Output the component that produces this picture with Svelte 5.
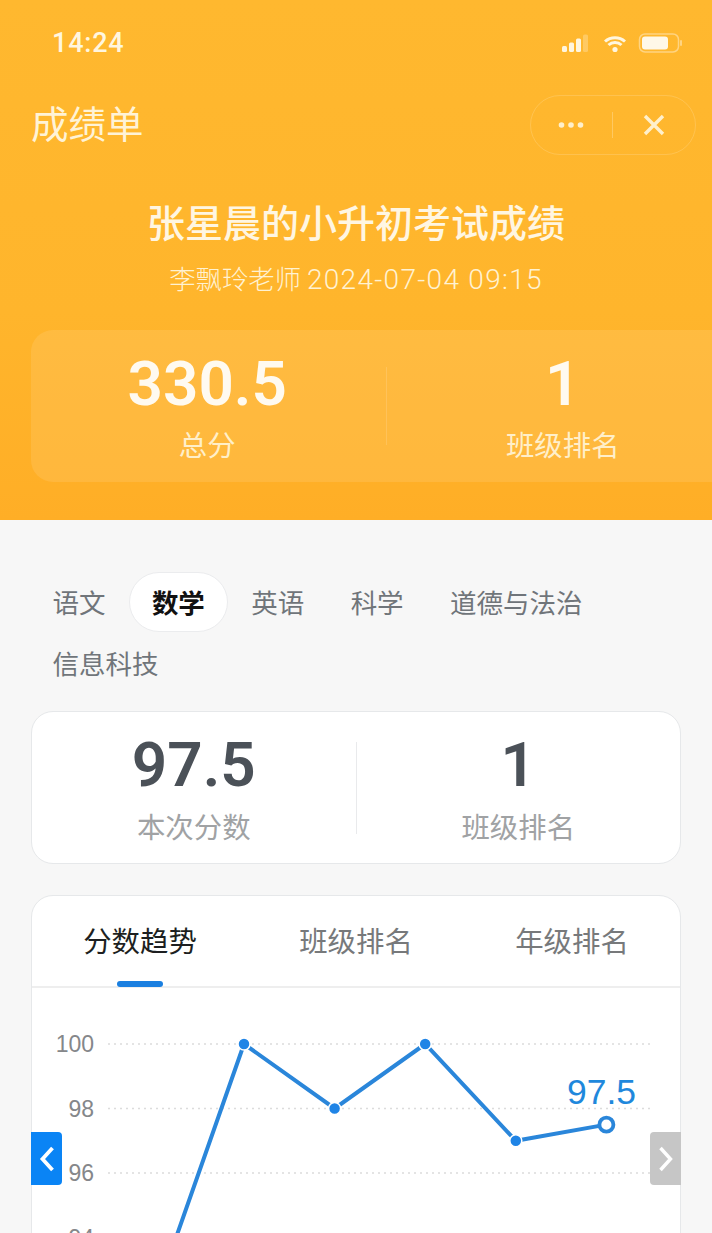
<script>
const subjects = ['语文', '数学', '英语', '科学', '道德与法治', '信息科技'];
const chartTabs = ['分数趋势', '班级排名', '年级排名'];

// y axis: 100 is at y=56, every 2 points is 64.5px
const yTicks = [100, 98, 96, 94];
const toY = v => 56 + (100 - v) * 32.25;
const scores = [92, 100, 98, 100, 97, 97.5];
const points = scores.map((v, i) => ({ x: 153.4 + i * 90.6, y: toY(v) }));
const linePath = points.map(p => `${p.x},${p.y}`).join(' ');
const last = points[points.length - 1];
</script>

<div class="page">
  <header class="hero">
    <div class="status">
      <span class="time">14:24</span>
      <svg class="status-icons" width="122" height="24" viewBox="0 0 122 24">
        <g fill="#fff6df">
          <rect x="2" y="15" width="5" height="6" rx="1.5" />
          <rect x="9" y="11.5" width="5" height="9.5" rx="1.5" />
          <rect x="16" y="7.5" width="5" height="13.5" rx="1.5" />
        </g>
        <rect x="23" y="3.5" width="5" height="17.5" rx="1.5" fill="#fff" opacity="0.25" />
        <path d="M45 10.5a15 15 0 0 1 20 0M48.5 14a9.5 9.5 0 0 1 13 0" fill="none" stroke="#fff6df" stroke-width="3" />
        <circle cx="55" cy="18.5" r="2.6" fill="#fff6df" />
        <rect x="79.5" y="3" width="39" height="18" rx="5.5" fill="none" stroke="#fff" stroke-opacity="0.4" stroke-width="1.5" />
        <rect x="82" y="5.5" width="26" height="13" rx="3" fill="#fff8e8" />
        <rect x="120" y="9" width="2" height="6" rx="1" fill="#fff" opacity="0.4" />
      </svg>
    </div>

    <div class="nav">
      <span class="nav-title">成绩单</span>
      <div class="capsule">
        <svg class="dots" width="26" height="8" viewBox="0 0 26 8">
          <circle cx="3.5" cy="4" r="2.8" fill="#fff0cc" />
          <circle cx="13" cy="4" r="2.8" fill="#fff0cc" />
          <circle cx="22.5" cy="4" r="2.8" fill="#fff0cc" />
        </svg>
        <span class="capsule-line"></span>
        <svg class="close" width="24" height="24" viewBox="0 0 24 24">
          <path d="M3 3l18 18M21 3L3 21" stroke="#fff0cc" stroke-width="3.4" fill="none" />
        </svg>
      </div>
    </div>

    <h1>张星晨的小升初考试成绩</h1>
    <p class="sub">李飘玲老师 <span class="date">2024-07-04 09:15</span></p>

    <div class="total-card">
      <div class="stat">
        <span class="num">330.5</span>
        <span class="lbl">总分</span>
      </div>
      <span class="total-line"></span>
      <div class="stat">
        <span class="num">1</span>
        <span class="lbl">班级排名</span>
      </div>
    </div>
  </header>

  <main class="body">
    <div class="subjects">
      {#each subjects as s, i}
        <span class="subject" class:active={i === 1}>{s}</span>
      {/each}
    </div>

    <section class="score-card">
      <div class="score">
        <span class="num">97.5</span>
        <span class="lbl">本次分数</span>
      </div>
      <span class="score-line"></span>
      <div class="score">
        <span class="num">1</span>
        <span class="lbl">班级排名</span>
      </div>
    </section>

    <section class="chart-card">
      <div class="chart-tabs">
        {#each chartTabs as t, i}
          <div class="chart-tab" class:on={i === 0}>{t}</div>
        {/each}
      </div>

      <div class="chart">
        <svg width="648" height="360" viewBox="32 0 648 360">
          {#each yTicks as t}
            <line x1="108" x2="652" y1={toY(t)} y2={toY(t)} stroke="#dcdcdc" stroke-width="1.5" stroke-dasharray="2 4" />
            <text x="94" y={toY(t) + 8} text-anchor="end" class="tick">{t}</text>
          {/each}
          <polyline points={linePath} fill="none" stroke="#2a86da" stroke-width="4" />
          {#each points.slice(0, -1) as p}
            <circle cx={p.x} cy={p.y} r="6" fill="#1f84e6" stroke="#fff" stroke-width="1.5" />
          {/each}
          <circle cx={last.x} cy={last.y} r="7" fill="#fff" stroke="#2a86da" stroke-width="3.8" />
          <text x="601.5" y="116" text-anchor="middle" class="point-label">97.5</text>
        </svg>

        <button class="arrow left" aria-label="上一个">
          <svg width="16" height="26" viewBox="0 0 16 26"><path d="M13.5 2L3.5 13l10 11" fill="none" stroke="#fff" stroke-width="3.8" /></svg>
        </button>
        <button class="arrow right" aria-label="下一个">
          <svg width="16" height="26" viewBox="0 0 16 26"><path d="M2.5 2l10 11-10 11" fill="none" stroke="#fff" stroke-width="3.4" /></svg>
        </button>
      </div>
    </section>
  </main>
</div>

<style>
:global(body) { margin: 0; }

.page {
  width: 712px;
  height: 1233px;
  overflow: hidden;
  background: #f7f7f7;
  font-family: "Noto Sans CJK SC", "Noto Sans", sans-serif;
}

.hero {
  box-sizing: border-box;
  height: 520px;
  padding-top: 25px;
  background: linear-gradient(180deg, #ffb82f 0%, #ffb52c 60%, #ffae26 100%);
  color: #fff;
  overflow: hidden;
}

.status {
  display: flex;
  justify-content: space-between;
  align-items: center;
  height: 36px;
  padding: 0 30px 0 52px;
}
.time {
  font-family: Roboto, sans-serif;
  font-size: 27px;
  font-weight: 500;
  letter-spacing: 0.8px;
  color: #fff6df;
}

.nav {
  display: flex;
  justify-content: space-between;
  align-items: center;
  height: 60px;
  margin-top: 34px;
  padding: 0 16px 0 31px;
}
.nav-title {
  font-size: 37.5px;
  line-height: 50px;
  padding-bottom: 6px;
  color: #fff3d6;
}
.capsule {
  box-sizing: border-box;
  width: 166px;
  height: 60px;
  display: flex;
  align-items: center;
  border: 1.5px solid rgba(255, 255, 255, 0.16);
  border-radius: 30px;
}
.dots {
  margin-left: 27px;
}
.capsule-line {
  width: 1px;
  height: 26px;
  margin-left: 28px;
  background: rgba(255, 255, 255, 0.25);
}
.close {
  margin-left: 29px;
}

h1 {
  margin: 38px 0 0;
  height: 56px;
  line-height: 56px;
  text-align: center;
  font-size: 38px;
  font-weight: 500;
  color: #fff6e2;
}
.sub {
  margin: 10px 0 0;
  height: 38px;
  line-height: 38px;
  text-align: center;
  font-size: 26.4px;
  font-weight: 300;
  color: #fff2d2;
}
.date {
  font-family: Roboto, sans-serif;
  font-size: 28px;
  letter-spacing: 1.3px;
}

.total-card {
  box-sizing: border-box;
  width: 708px;
  height: 152px;
  margin: 33px 0 0 31px;
  display: flex;
  align-items: center;
  background: rgba(255, 255, 255, 0.1);
  border-radius: 22px;
}
.stat {
  flex: 1;
  display: flex;
  flex-direction: column;
  align-items: center;
}
.stat .num {
  font-family: Roboto, sans-serif;
  font-size: 62px;
  font-weight: 600;
  line-height: 72px;
  color: #fffaf0;
}
.stat .lbl {
  margin-top: 3px;
  font-size: 28.4px;
  line-height: 42px;
  color: #ffefc9;
}
.total-line {
  width: 1px;
  height: 78px;
  background: rgba(255, 255, 255, 0.14);
  margin-left: 2px;
}

.body {
  padding: 52px 31px 0;
}

.subjects {
  display: flex;
  flex-wrap: wrap;
  row-gap: 1px;
  margin-left: -1.7px;
  width: 640px;
}
.subject {
  box-sizing: border-box;
  height: 60px;
  line-height: 58px;
  padding: 0 22.2px;
  font-size: 26.5px;
  color: #70757a;
  border: 1px solid transparent;
  border-radius: 30px;
}
.subject.active {
  background: #fff;
  border-color: #ebecee;
  color: #111;
  font-weight: 700;
}

.score-card {
  box-sizing: border-box;
  height: 153px;
  margin-top: 18px;
  display: flex;
  align-items: center;
  background: #fff;
  border: 1px solid #e6e8ea;
  border-radius: 22px;
}
.score {
  flex: 1;
  display: flex;
  flex-direction: column;
  align-items: center;
}
.score .num {
  font-family: Roboto, sans-serif;
  font-size: 62px;
  font-weight: 600;
  line-height: 74px;
  color: #4b5158;
}
.score .lbl {
  margin-top: 3px;
  font-size: 28.4px;
  line-height: 42px;
  color: #a0a2a4;
}
.score-line {
  width: 1px;
  height: 92px;
  background: #e9eaec;
}

.chart-card {
  box-sizing: border-box;
  height: 500px;
  margin-top: 31px;
  background: #fff;
  border: 1px solid #e6e8ea;
  border-radius: 22px;
}
.chart-tabs {
  display: flex;
  height: 90px;
  border-bottom: 2px solid #eeeeee;
}
.chart-tab {
  position: relative;
  flex: 1;
  text-align: center;
  font-size: 28.4px;
  line-height: 88px;
  color: #77797b;
}
.chart-tab.on {
  color: #1d1f21;
}
.chart-tab.on::after {
  content: '';
  position: absolute;
  left: 85px;
  bottom: -1px;
  width: 46px;
  height: 6px;
  border-radius: 3px;
  background: #1a7fe0;
}

.chart {
  position: relative;
}
.chart svg {
  display: block;
}
.tick {
  font-family: "Liberation Sans", Arial, sans-serif;
  font-size: 23px;
  fill: #85878a;
}
.point-label {
  font-family: "Liberation Sans", Arial, sans-serif;
  font-size: 35.5px;
  fill: #1f88dc;
}

.arrow {
  position: absolute;
  top: 144px;
  width: 31px;
  height: 53px;
  padding: 0;
  border: none;
  display: flex;
  align-items: center;
  justify-content: center;
}
.arrow svg {
  display: block;
}
.arrow.left {
  left: -1px;
  background: #0a84f5;
  border-radius: 0 4px 4px 0;
}
.arrow.right {
  right: -1px;
  background: #c6c6c6;
  border-radius: 4px 0 0 4px;
}
</style>
